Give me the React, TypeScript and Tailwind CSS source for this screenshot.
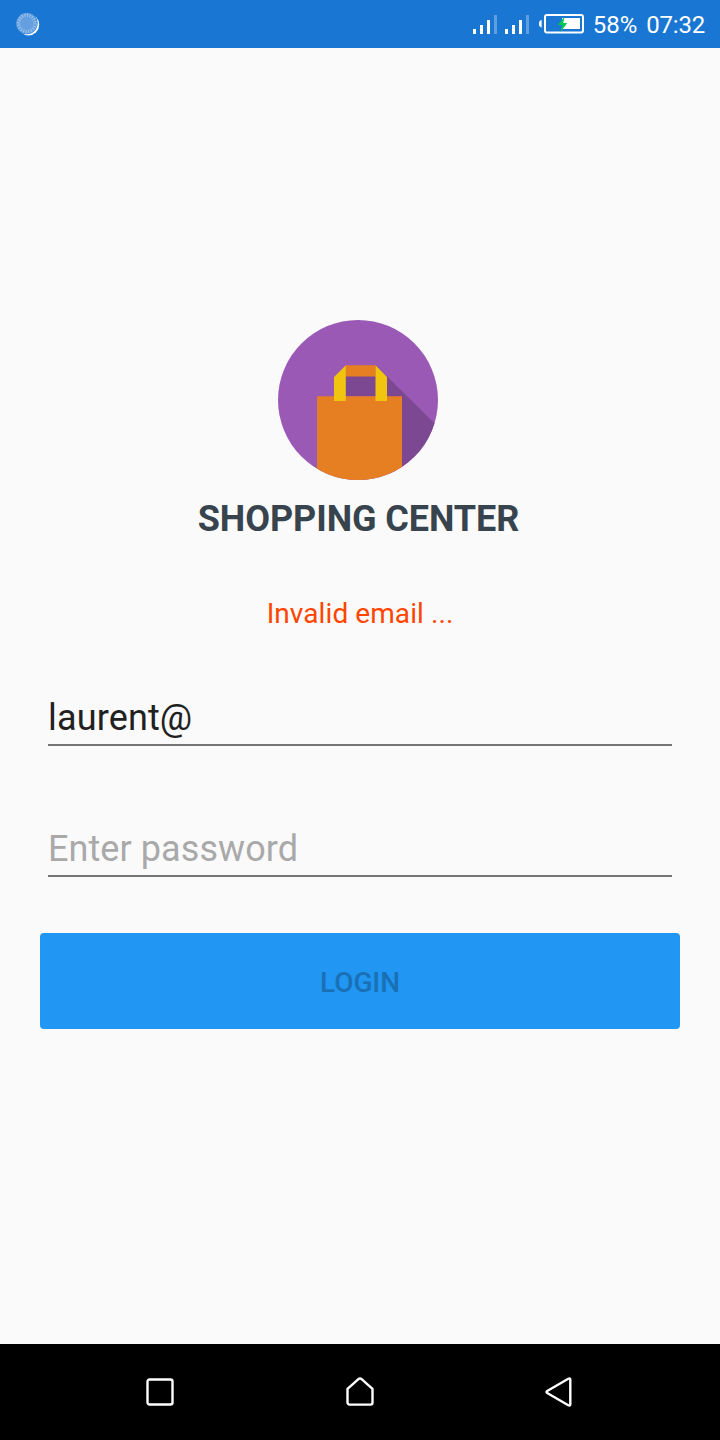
import React, { useState } from 'react';

function SyncIcon() {
  return (
    <svg className="h-6 w-6" viewBox="0 0 24 24">
      <circle cx="12.6" cy="12.800" r="10.600" fill="#fff" />
      <circle cx="10.600" cy="11.200" r="11" fill="#1976d2" />
      <circle cx="10.800" cy="11.400" r="10.600" fill="#64a0e0" />
      <circle cx="10.800" cy="11.400" r="8.200" fill="none" stroke="#a0c5ec" strokeWidth="3.200" strokeDasharray="1 1.576" />
    </svg>
  );
}

function SignalIcon() {
  return (
    <svg className="h-5 w-6" viewBox="0 0 24 20">
      <path d="M0 14h3v5H0zM7 10h3v9H7zM14 5h3v14h-3z" fill="#fff" />
      <path d="M21 0h3v19h-3z" fill="#5e9fe0" />
    </svg>
  );
}

function BatteryIcon() {
  return (
    <svg className="h-5 w-[45px]" viewBox="0 0 45 20">
      <path d="M2.600 6v7.400C.6 12.800 0 11.800 0 9.700S.6 6.500 2.600 6z" fill="#fff" />
      <rect x="6" y="1" width="38" height="17.600" rx="2" fill="none" stroke="#fff" strokeWidth="2" />
      <path d="M23 4h18v11H23z" fill="#fff" />
      <path d="M25.500 2.700 18.800 11h4.200l-1.500 7.300 6.700-9.300h-3.900z" fill="#06c755" />
    </svg>
  );
}

function ShopLogo() {
  return (
    <svg className="mr-1 h-40 w-40" viewBox="0 0 160 160">
      <defs>
        <clipPath id="disc">
          <circle cx="80" cy="80" r="80" />
        </clipPath>
      </defs>
      <g clipPath="url(#disc)">
        <path d="M0 0h160v160H0z" fill="#9b59b6" />
        <path d="M67.500 56V46h31l72 71v43h-60V76h-43z" fill="#7c4892" />
        <path d="M39 76.200h85V160H39z" fill="#e67e22" />
        <path d="M67.500 45.300h30.200v11.200H67.500z" fill="#e67e22" />
        <path d="M56 57 67.800 45.300V81H56zM97.500 45.300 109 57v24H97.500z" fill="#f1c40f" />
      </g>
    </svg>
  );
}

const navIcons = [
  { label: 'Recent apps', path: 'M5.500 3.500h21a2 2 0 0 1 2 2v21a2 2 0 0 1-2 2h-21a2 2 0 0 1-2-2v-21a2 2 0 0 1 2-2z' },
  { label: 'Home', path: 'M3.500 12.900 14.400 3.200q1.600-1.400 3.200 0l10.900 9.700v13.700a2 2 0 0 1-2 2h-21a2 2 0 0 1-2-2z' },
  { label: 'Back', path: 'M24.300 2.800q2-1 2 1v24.400q0 2-2 1L3.200 17q-1.400-1 0-2z' },
];

export default function App() {
  const [email, setEmail] = useState('laurent@');
  const [password, setPassword] = useState('');
  const field =
    'block h-[49px] w-full rounded-none border-b-2 border-[#757575] bg-transparent p-0 pb-[5px] text-[36px] leading-[42px] text-[#212121] outline-none placeholder:text-[#a9a9a9] placeholder:opacity-100';

  return (
    <div className="flex h-[1440px] w-[720px] flex-col overflow-hidden bg-[#fafafa] font-['Roboto',sans-serif]">
      <header className="flex h-12 shrink-0 items-center bg-[#1976d2] pr-[15px] pl-4 text-white">
        <SyncIcon />
        <div className="ml-auto flex items-center gap-2 pt-0.5">
          <SignalIcon />
          <SignalIcon />
        </div>
        <div className="ml-2.5">
          <BatteryIcon />
        </div>
        <span className="ml-[9px] pt-0.5 text-[24px] leading-7">58%</span>
        <span className="ml-[9px] pt-0.5 text-[24px] leading-7 tracking-[-0.2px]">07:32</span>
      </header>

      <main className="flex flex-1 flex-col items-center px-10 pt-[272px]">
        <ShopLogo />
        <h1 className="mt-[18px] mr-[3px] text-[36px] leading-[42px] font-bold tracking-[-0.06px] text-[#38444d]">SHOPPING CENTER</h1>
        <p className="mt-[58px] text-[28px] leading-8 tracking-[0.08px] text-[#ff4500]">Invalid email ...</p>
        <form className="mt-[67px] w-full" onSubmit={(e) => e.preventDefault()}>
          <div className="px-2">
            <input
              className={`${field} tracking-[0.15px]`}
              aria-label="Email"
              value={email}
              onChange={(e) => setEmail(e.target.value)}
            />
            <input
              className={`${field} mt-[82px] tracking-[0.08px]`}
              type="password"
              placeholder="Enter password"
              value={password}
              onChange={(e) => setPassword(e.target.value)}
            />
          </div>
          <button
            type="submit"
            disabled
            className="mt-14 flex h-24 w-full items-center justify-center rounded-[4px] bg-[#2196f3] pt-1 text-[28px] leading-8 font-medium tracking-[-0.1px] text-[#1a70b5]"
          >
            LOGIN
          </button>
        </form>
      </main>

      <nav className="flex h-24 shrink-0 items-center justify-between bg-black px-36">
        {navIcons.map((icon) => (
          <button key={icon.label} aria-label={icon.label}>
            <svg className="h-8 w-8" viewBox="0 0 32 32" fill="none" stroke="#fff" strokeWidth="2.400" strokeLinejoin="round" overflow="visible">
              <path d={icon.path} />
            </svg>
          </button>
        ))}
      </nav>
    </div>
  );
}
